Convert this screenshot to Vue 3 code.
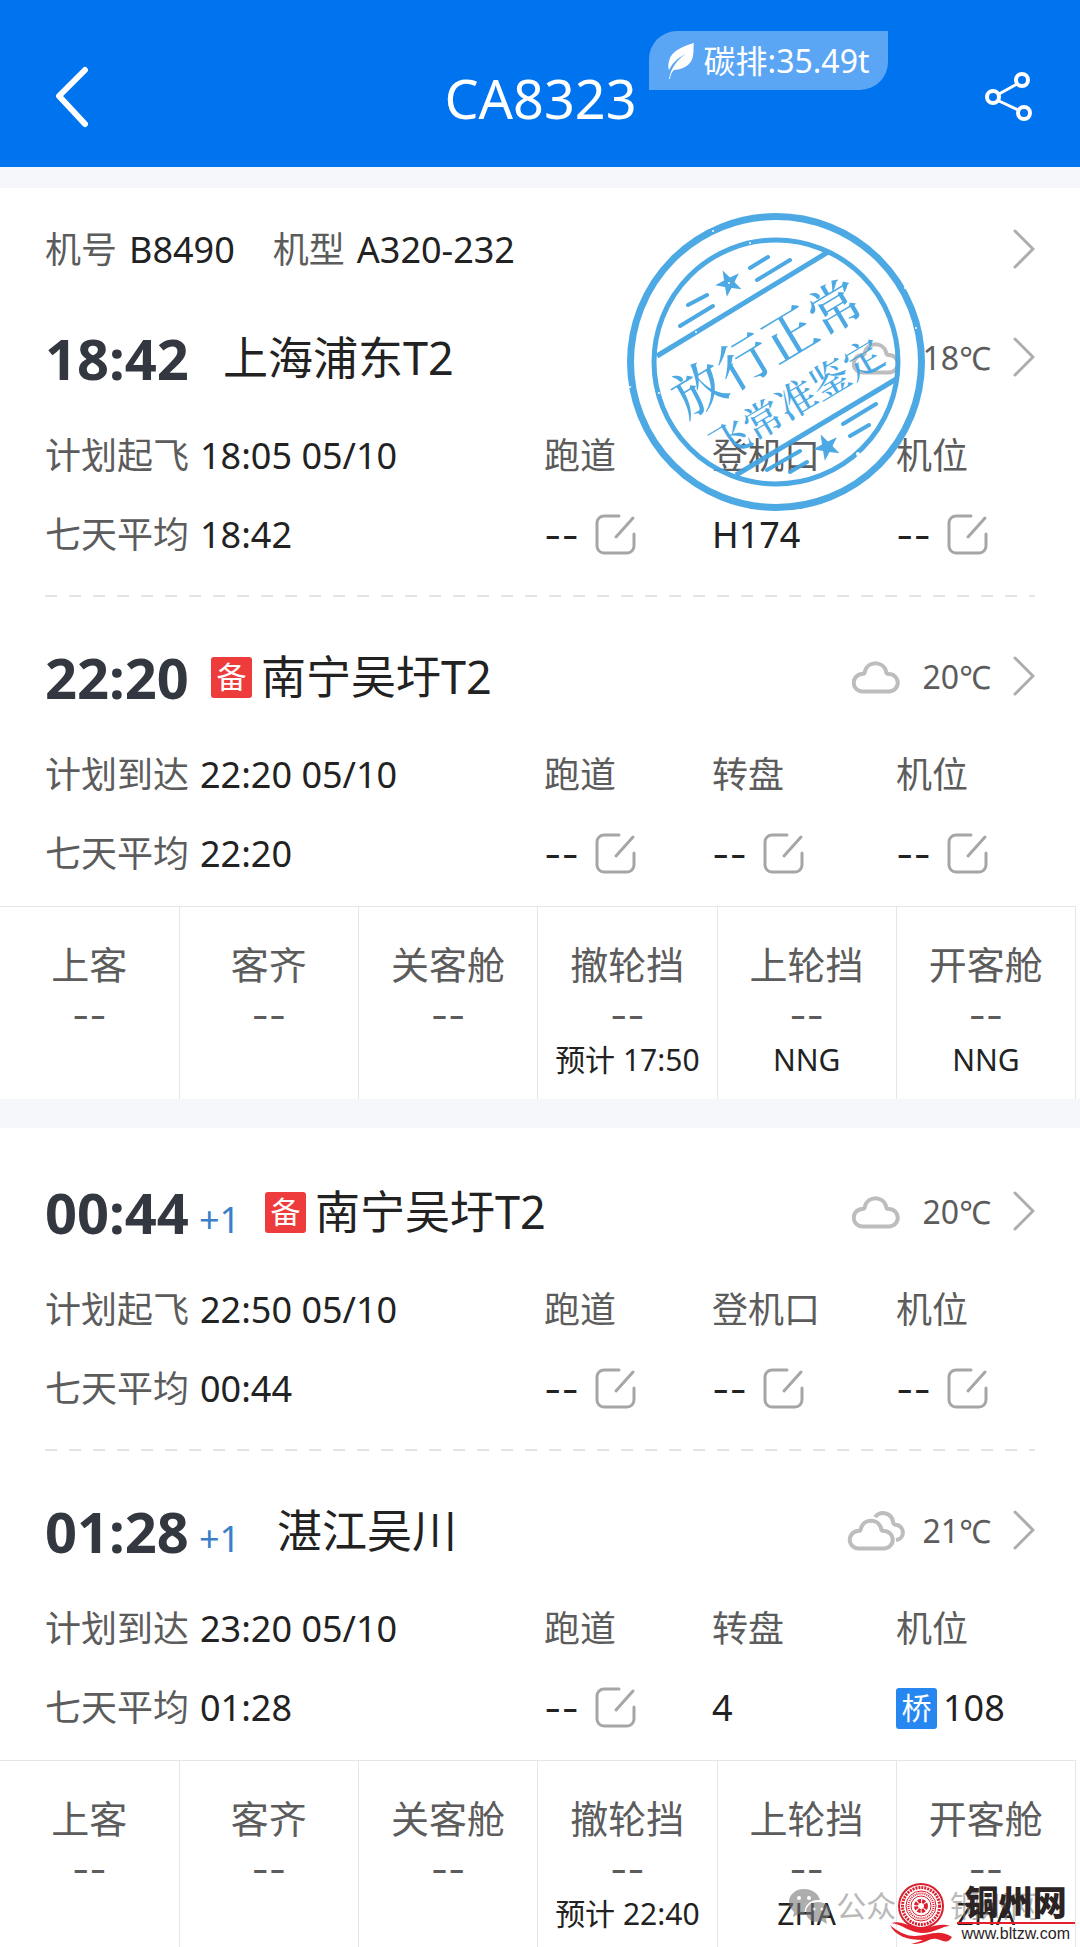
<script setup>
const flight = { number: 'CA8323', carbon: '35.49t', tail: 'B8490', type: 'A320-232' }

// Each segment is one departure + arrival pair with its ground progress table
const segments = [
  {
    legs: [
      {
        time: '18:42', airport: '上海浦东T2', temp: '18℃', weather: 'cloud',
        planLabel: '计划起飞', plan: '18:05 05/10', avg: '18:42',
        fields: [{ label: '跑道' }, { label: '登机口', value: 'H174' }, { label: '机位' }]
      },
      {
        time: '22:20', backup: true, airport: '南宁吴圩T2', temp: '20℃', weather: 'cloud',
        planLabel: '计划到达', plan: '22:20 05/10', avg: '22:20',
        fields: [{ label: '跑道' }, { label: '转盘' }, { label: '机位' }]
      }
    ],
    steps: [
      { name: '上客' },
      { name: '客齐' },
      { name: '关客舱' },
      { name: '撤轮挡', note: '预计 17:50' },
      { name: '上轮挡', note: 'NNG' },
      { name: '开客舱', note: 'NNG' }
    ]
  },
  {
    legs: [
      {
        time: '00:44', nextDay: true, backup: true, airport: '南宁吴圩T2', temp: '20℃', weather: 'cloud',
        planLabel: '计划起飞', plan: '22:50 05/10', avg: '00:44',
        fields: [{ label: '跑道' }, { label: '登机口' }, { label: '机位' }]
      },
      {
        time: '01:28', nextDay: true, airport: '湛江吴川', temp: '21℃', weather: 'clouds',
        planLabel: '计划到达', plan: '23:20 05/10', avg: '01:28',
        fields: [{ label: '跑道' }, { label: '转盘', value: '4' }, { label: '机位', value: '108', bridge: true }]
      }
    ],
    steps: [
      { name: '上客' },
      { name: '客齐' },
      { name: '关客舱' },
      { name: '撤轮挡', note: '预计 22:40' },
      { name: '上轮挡', note: 'ZHA' },
      { name: '开客舱', note: 'ZHA' }
    ]
  }
]

const star = '0,-14 3.3,-4.5 13.3,-4.3 5.3,1.7 8.2,11.3 0,5.6 -8.2,11.3 -5.3,1.7 -13.3,-4.3 -3.3,-4.5'
</script>

<template>
  <div class="page">
    <header class="topBar">
      <button class="iconBtn" aria-label="返回">
        <svg width="44" height="64" viewBox="0 0 44 64" fill="none" stroke="#fff" stroke-width="6" stroke-linecap="round" stroke-linejoin="round">
          <path d="M32 4 6 30l26 28" />
        </svg>
      </button>
      <div class="titleWrap">
        <h1>{{ flight.number }}</h1>
        <span class="carbon">
          <svg width="28" height="38" viewBox="0 0 28 38">
            <path d="M27 1C16 4 4 9 2 19c-1 4-1 6 0 9C6 20 12 15 19 12 11 17 4 25 2 37h1c0-4 2-7 4-9 12-1 18-7 19-14 1-5 0-9 1-13Z" fill="#fff" />
          </svg>
          碳排:{{ flight.carbon }}
        </span>
      </div>
      <button class="iconBtn" aria-label="分享">
        <svg width="50" height="52" viewBox="0 0 50 52" fill="none" stroke="#fff" stroke-width="4">
          <circle cx="9" cy="25" r="6" />
          <circle cx="38" cy="8" r="6" />
          <circle cx="40" cy="41" r="6" />
          <path d="m15 22 18-10M15 29l19 9" stroke-width="3" />
        </svg>
      </button>
    </header>

    <main>
      <section v-for="(seg, segIndex) in segments" :key="segIndex" class="card">
        <div v-if="segIndex === 0" class="aircraft">
          <span class="label">机号</span>
          <span>{{ flight.tail }}</span>
          <span class="label second">机型</span>
          <span>{{ flight.type }}</span>
          <button class="iconBtn push" aria-label="飞机详情">
            <svg class="arrow" viewBox="0 0 24 42"><path d="M4 2l18 18L4 38" /></svg>
          </button>
        </div>

        <div v-for="leg in seg.legs" :key="leg.time" class="leg">
          <div class="legHead">
            <h2>{{ leg.time }}</h2>
            <span v-if="leg.nextDay" class="nextDay">+1</span>
            <span v-if="leg.backup" class="tag red">备</span>
            <span class="airport" :class="{ plain: !leg.backup }">{{ leg.airport }}</span>
            <span class="weather">
              <svg v-if="leg.weather === 'cloud'" width="48" height="34" viewBox="0 0 48 34">
                <path d="M11 31.500a8.500 8.500 0 0 1-1-17.500c2 0 3-1 3-3a11 11 0 0 1 21 0c0 2 1 3 3 3a8.500 8.500 0 0 1 0 17.500Z" />
              </svg>
              <svg v-else class="wide" width="52" height="40" viewBox="0 0 52 40">
                <path d="M11 37.500a8.500 8.500 0 0 1-1-17.500c2 0 3-1 3-3a10.500 10.500 0 0 1 20 0c0 2 1 3 3 3a8.500 8.500 0 0 1 0 17.500Z" />
                <path d="M27 6c6-7 17-4 18 5 0 2 2 3 4 3 8 2 8 14-1 15" />
              </svg>
              <span>{{ leg.temp }}</span>
            </span>
            <button class="iconBtn" aria-label="天气详情">
              <svg class="arrow" viewBox="0 0 24 42"><path d="M4 2l18 18L4 38" /></svg>
            </button>
          </div>

          <div class="details">
            <div class="field">
              <div class="pair"><span class="label">{{ leg.planLabel }}</span>{{ leg.plan }}</div>
              <div class="pair"><span class="label">七天平均</span>{{ leg.avg }}</div>
            </div>
            <div v-for="field in leg.fields" :key="field.label" class="field">
              <div class="pair label">{{ field.label }}</div>
              <div v-if="field.value" class="pair tight">
                <span v-if="field.bridge" class="tag blue">桥</span>{{ field.value }}
              </div>
              <div v-else class="pair empty">
                <span class="dash">--</span>
                <button class="iconBtn" :aria-label="'编辑' + field.label">
                  <svg width="42" height="42" viewBox="0 0 42 42" fill="none" stroke="#a6a6a6" stroke-width="3" stroke-linecap="round">
                    <path d="M24 2H9a7 7 0 0 0-7 7v23a7 7 0 0 0 7 7h23a7 7 0 0 0 7-7V20M21 23 38 4" />
                  </svg>
                </button>
              </div>
            </div>
          </div>
        </div>

        <table>
          <thead>
            <tr>
              <th v-for="step in seg.steps" :key="step.name" scope="col">{{ step.name }}</th>
            </tr>
          </thead>
          <tbody>
            <tr>
              <td v-for="step in seg.steps" :key="step.name"><span class="dash">--</span></td>
            </tr>
            <tr class="notes">
              <td v-for="step in seg.steps" :key="step.name">{{ step.note }}</td>
            </tr>
          </tbody>
        </table>

        <!-- release stamp over the first card -->
        <svg v-if="segIndex === 0" class="stamp" viewBox="0 0 300 300">
          <g fill="none" stroke="#43a5e2" stroke-linecap="round">
            <circle cx="150" cy="150" r="145.500" stroke-width="7" />
            <circle cx="150" cy="150" r="122" stroke-width="5" />
            <path d="M31 144 202 40M110 263l162-97" stroke-width="5" stroke-linecap="butt" />
            <path d="m54 114 33-20M62 93l19-10M124 56l18-11M131 68l33-20M217 212l33-20M224 224l19-11M141 258l33-19M164 260l17-10" stroke-width="4" />
          </g>
          <g fill="#43a5e2">
            <polygon :points="star" transform="translate(103 71) rotate(-27)" />
            <polygon :points="star" transform="translate(201 235) rotate(-27)" />
            <text class="big" transform="translate(139 133) rotate(-31)">放行正常</text>
            <text class="sub" transform="translate(169 185) rotate(-31)">飞常准鉴定</text>
          </g>
          <g fill="#fff">
            <circle cx="87" cy="19" r="1" />
            <circle cx="124" cy="31" r="1" />
            <circle cx="279" cy="76" r="1" />
            <circle cx="290" cy="116" r="1" />
            <circle cx="4" cy="175" r="1" />
            <circle cx="33" cy="181" r="1" />
            <circle cx="70" cy="120" r="1" />
            <circle cx="103" cy="71" r="1" />
            <circle cx="232" cy="242" r="2" />
          </g>
        </svg>
      </section>
    </main>

    <div class="account">
      <svg width="42" height="36" viewBox="0 0 42 36">
        <path d="M16 1C7 1 1 7 1 14c0 4 2 7 5 10l-1 5 6-3c2 1 4 1 6 1-2-9 5-16 15-15C30 5 24 1 16 1Z" />
        <path d="M30 14c-7 0-12 4-12 10s5 10 12 10l4-1 5 3-1-5c3-2 4-4 4-7 0-6-5-10-12-10Z" />
        <g fill="#fff">
          <circle cx="11" cy="10" r="2" />
          <circle cx="21" cy="10" r="2" />
          <circle cx="26" cy="21" r="1.500" />
          <circle cx="34" cy="21" r="1.500" />
        </g>
      </svg>
      公众号 · 铜州网
    </div>

    <a class="site" href="#">
      <svg width="64" height="62" viewBox="0 0 64 62">
        <circle cx="32" cy="24" r="23" fill="#fff" />
        <g fill="none" stroke="#d8202f">
          <circle cx="32" cy="24" r="22" stroke-width="2" />
          <circle cx="32" cy="24" r="18.500" stroke-width="3" stroke-dasharray="2 1" />
          <circle cx="32" cy="24" r="15" stroke-width="1" />
          <circle cx="32" cy="24" r="12.500" stroke-width="2" stroke-dasharray="1 1" />
          <circle cx="32" cy="24" r="10" stroke-width="1" />
          <circle cx="32" cy="24" r="5" stroke-width="4" stroke-dasharray="3 1" />
        </g>
        <path d="M2 41c10-3 17 3 28 5 11 1 20-6 31-2-8 0-15 7-28 7C21 51 13 42 2 41Z" fill="#e3202c" />
        <path d="M1 43c7 6 15 11 25 11 12 0 24-8 37 1-4 7-9 4-15 2-8-2-10 5-26 5 6-1 9-3 12-4C19 58 6 54 1 43Z" fill="#e3202c" />
      </svg>
      <span class="siteText">
        <strong>铜州网</strong>
        <span class="url">www.bltzw.com</span>
      </span>
    </a>
  </div>
</template>

<style>
body {
  margin: 0;
  background: #f5f7fb;
}
</style>

<style scoped>
.page {
  position: relative;
  font-family: "Noto Sans", "Noto Sans CJK SC", sans-serif;
  font-size: 36px;
  line-height: 44px;
  color: #222;
  overflow: hidden;
}

h1,
h2 {
  margin: 0;
}

.iconBtn {
  display: flex;
  padding: 0;
  border: 0;
  background: none;
  cursor: pointer;
}

.topBar {
  display: flex;
  justify-content: space-between;
  align-items: center;
  height: 138px;
  padding: 29px 46px 0 53px;
  background: #0073ee;
  color: #fff;
}

.titleWrap {
  position: relative;
}

h1 {
  font-size: 54px;
  line-height: 64px;
  font-weight: 400;
}

.carbon {
  position: absolute;
  left: 100%;
  bottom: 40px;
  display: flex;
  align-items: center;
  gap: 9px;
  height: 59px;
  margin-left: 12px;
  padding: 0 18px;
  border-radius: 28px 0;
  background: #5aa5f4;
  font-size: 32px;
  white-space: nowrap;
}

.card {
  position: relative;
  margin-top: 21px;
  background: #fff;
}

.card + .card {
  margin-top: 29px;
}

.aircraft {
  display: flex;
  align-items: center;
  gap: 12px;
  padding: 40px 45px 0;
}

.label {
  color: #5c5c5c;
}

.second {
  margin-left: 26px;
}

.push {
  margin-left: auto;
}

.arrow {
  width: 24px;
  height: 42px;
  fill: none;
  stroke: #adadad;
  stroke-width: 3;
  stroke-linecap: round;
}

.leg {
  padding: 56px 45px 38px;
}

.card + .card .leg {
  padding-top: 54px;
}

.card .leg + .leg {
  padding-top: 52px;
  padding-bottom: 31px;
  background: repeating-linear-gradient(90deg, #e3e3e3 0 12px, transparent 12px 24px) 45px 0 / calc(100% - 90px) 2px no-repeat;
}

.legHead {
  display: flex;
  align-items: center;
  height: 60px;
}

h2 {
  font-size: 56px;
  line-height: 60px;
  color: #333740;
}

.nextDay {
  align-self: flex-end;
  margin: 0 3px 0 10px;
  color: #3a80c9;
}

.tag {
  width: 41px;
  height: 41px;
  border-radius: 3px;
  color: #fff;
  font-size: 30px;
  line-height: 40px;
  text-align: center;
}

.red {
  margin: 0 9px 0 22px;
  background: #ee3b3c;
}

.blue {
  background: #2787f0;
}

.airport {
  font-size: 45px;
}

.plain {
  margin-left: 34px;
}

.weather {
  display: flex;
  align-items: center;
  gap: 23px;
  margin-left: auto;
  margin-right: 20px;
  color: #5c5c5c;
  font-size: 32px;
}

.weather svg {
  fill: none;
  stroke: #bdbdbd;
  stroke-width: 4;
}

.weather .wide {
  overflow: visible;
}

.details {
  display: grid;
  grid-template-columns: 499fr 168fr 184fr 139fr;
  margin-top: 46px;
}

.field {
  display: grid;
  gap: 35px;
}

.pair {
  display: flex;
  align-items: center;
  gap: 11px;
  height: 44px;
  white-space: nowrap;
}

.tight {
  gap: 6px;
}

.empty {
  gap: 16px;
}

.dash {
  font-family: Inter, sans-serif;
  font-size: 38px;
}

table {
  width: calc(100% - 4px);
  border-collapse: collapse;
  table-layout: fixed;
  box-shadow: 0 -1px #e6e6e6;
}

th,
td {
  height: 44px;
  padding: 0;
  border-right: 1px solid #e6e6e6;
  color: #5c5c5c;
  text-align: center;
}

th {
  padding: 35px 0 7px;
  font-size: 38px;
  font-weight: 400;
}

.notes td {
  padding-bottom: 17px;
  color: #222;
  font-size: 30px;
  white-space: nowrap;
}

.card:last-child .notes td {
  padding-bottom: 12px;
}

.stamp {
  position: absolute;
  top: 24px;
  left: 58%;
  width: 300px;
  height: 300px;
  opacity: 0.95;
  pointer-events: none;
}

.stamp text {
  font-family: "Noto Serif CJK SC", "Noto Sans CJK SC", serif;
  font-weight: 500;
  text-anchor: middle;
  dominant-baseline: central;
}

.big {
  font-size: 53px;
}

.sub {
  font-size: 39px;
}

.account {
  position: absolute;
  right: 40px;
  bottom: 20px;
  display: flex;
  align-items: center;
  gap: 6px;
  color: #8c8c8c;
  font-size: 30px;
  opacity: 0.6;
}

.account svg {
  fill: #777;
}

.site {
  position: absolute;
  right: 5px;
  bottom: 4px;
  display: flex;
  align-items: flex-end;
  gap: 4px;
  color: #2b2324;
  text-decoration: none;
}

.siteText {
  display: grid;
  justify-items: center;
}

.siteText strong {
  font-size: 34px;
  font-weight: 900;
  line-height: 40px;
}

.url {
  padding: 0 5px;
  border-top: 2px solid #e3202c;
  font-family: "Liberation Sans", sans-serif;
  font-size: 16px;
  line-height: 20px;
}
</style>
